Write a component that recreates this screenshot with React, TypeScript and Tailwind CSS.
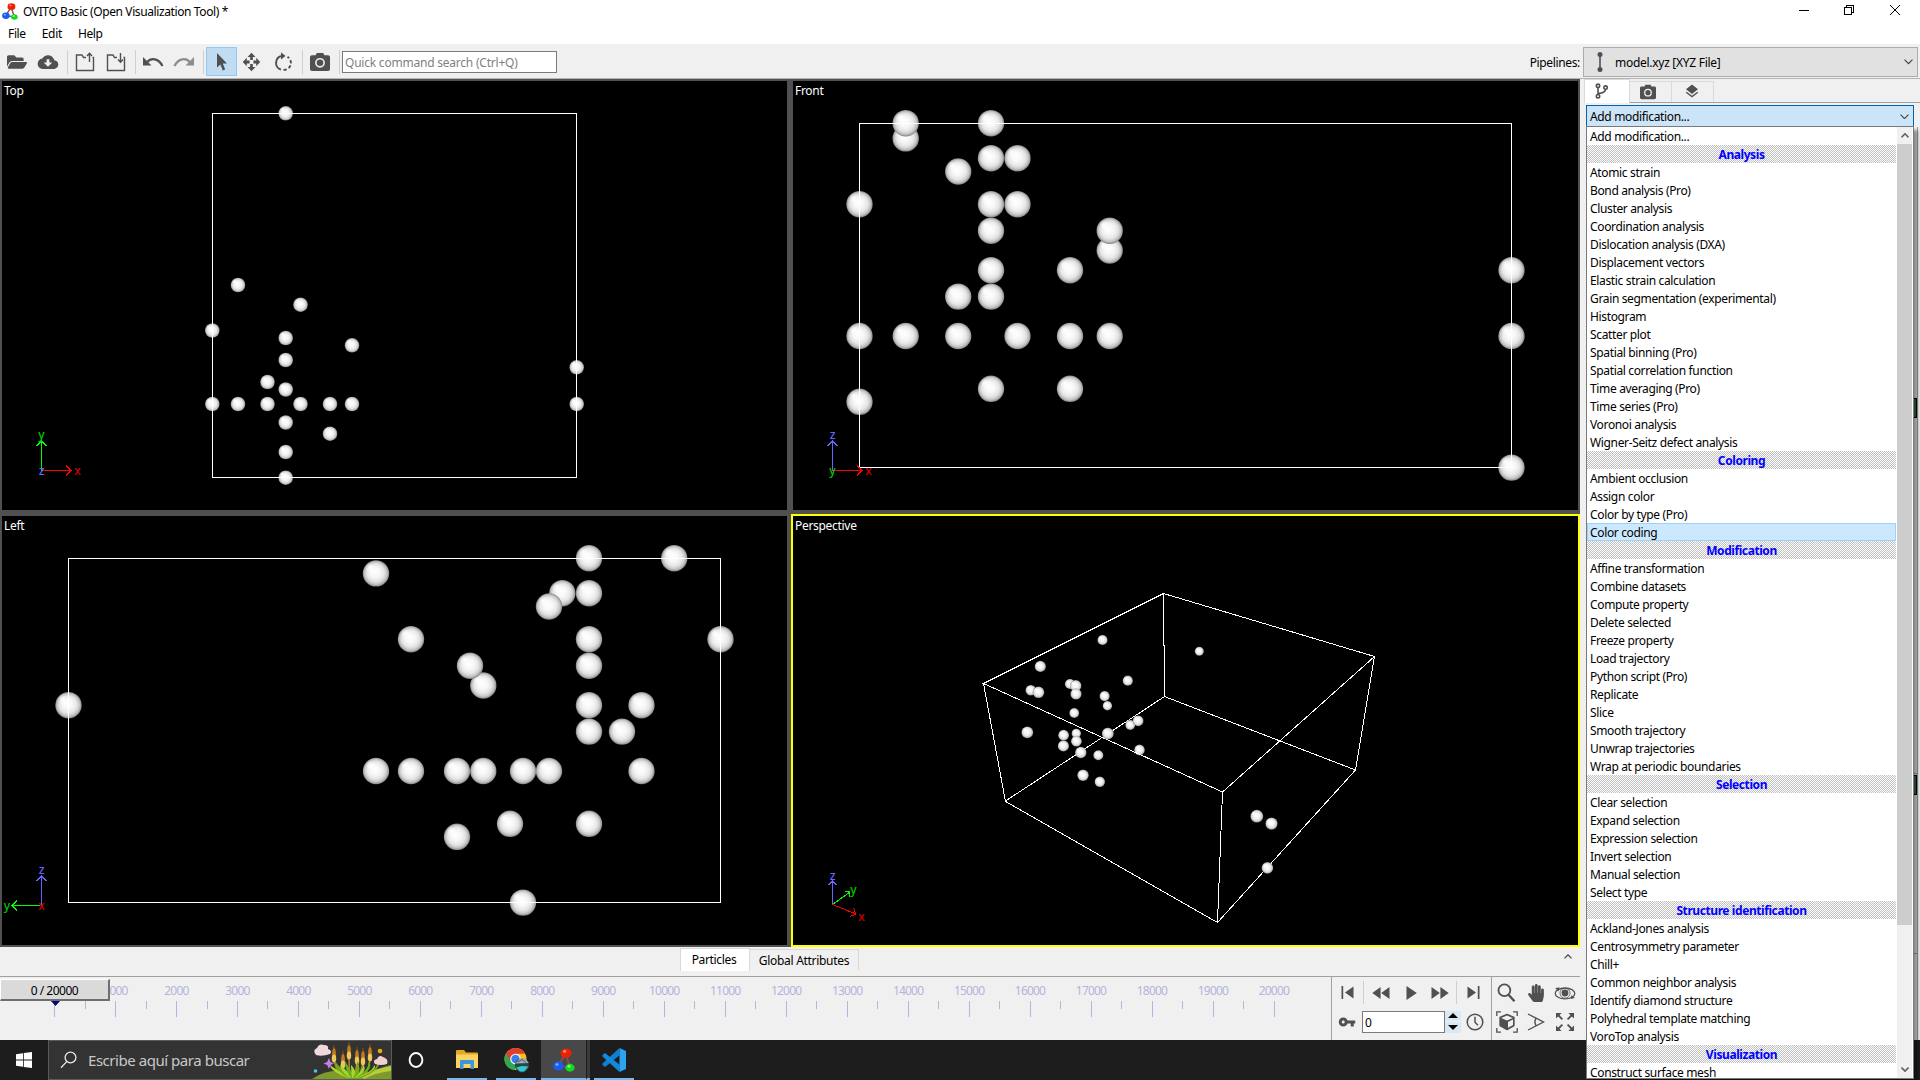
import React from "react";
import { FaFolderOpen, FaHandPaper } from "react-icons/fa";
import { IoMdCloudDownload } from "react-icons/io";
import { MdVpnKey } from "react-icons/md";

type Pt = [number, number];

const INK = "#505050";

/* ---------- viewport scenes ---------- */

function SphereDefs() {
  return (
    <svg className="absolute h-0 w-0">
      <defs>
        <radialGradient id="sphere" cx="0.5" cy="0.5" r="0.5" fx="0.44" fy="0.42">
          <stop offset="0" stopColor="#ffffff" />
          <stop offset="0.35" stopColor="#f8f8f8" />
          <stop offset="0.65" stopColor="#e6e6e6" />
          <stop offset="0.85" stopColor="#c4c4c4" />
          <stop offset="0.96" stopColor="#989898" />
          <stop offset="1" stopColor="#7c7c7c" />
        </radialGradient>
        <radialGradient id="glint">
          <stop offset="0" stopColor="#ffffff" stopOpacity="1" />
          <stop offset="1" stopColor="#ffffff" stopOpacity="0" />
        </radialGradient>
      </defs>
    </svg>
  );
}

function Spheres({ pts, r }: { pts: number[][]; r: number }) {
  return (
    <>
      {pts.map((p, i) => {
        const q = p[2] ?? r;
        return (
          <g key={i}>
            <circle cx={p[0]} cy={p[1]} r={q} fill="url(#sphere)" />
            <ellipse cx={p[0] - q * 0.42} cy={p[1] - q * 0.42} rx={q * 0.36} ry={q * 0.36} fill="url(#glint)" />
          </g>
        );
      })}
    </>
  );
}

function Arrow({ from, to, color }: { from: Pt; to: Pt; color: string }) {
  const dx = to[0] - from[0];
  const dy = to[1] - from[1];
  const l = Math.hypot(dx, dy);
  const s = Math.min(5, l * 0.18);
  const ux = (dx / l) * s;
  const uy = (dy / l) * s;
  return (
    <path
      d={`M${from[0]} ${from[1]}L${to[0]} ${to[1]}M${to[0] - ux - uy} ${to[1] - uy + ux}L${to[0]} ${to[1]}L${to[0] - ux + uy} ${to[1] - uy - ux}`}
      stroke={color}
      fill="none"
      shapeRendering="crispEdges"
    />
  );
}

function AxisLabel({ x, y, c, t }: { x: number; y: number; c: string; t: string }) {
  return (
    <text x={x} y={y + 3} fill={c} textAnchor="middle" className="font-['Noto_Sans'] text-[12px] font-medium tracking-normal">
      {t}
    </text>
  );
}

const RED = "#ff0000";
const GREEN = "#00ff00";
const BLUE = "#6666ff";

function Viewport({ title, view, active, children }: { title: string; view: string; active?: boolean; children: React.ReactNode }) {
  return (
    <div className={`relative h-[433px] w-[789px] border-2 bg-black ${active ? "border-[#ffff00]" : "border-[#505050]"}`}>
      <svg className="block h-[429px] w-[785px]" viewBox={view}>
        {children}
      </svg>
      <span className="absolute left-[2px] top-[2px] text-[12px] leading-[16px] tracking-[-0.3px] text-white">{title}</span>
    </div>
  );
}

const topPts = [
  [285.7, 113.3], [238, 285], [300.5, 304.7], [212.3, 330.5], [285.7, 338], [352, 345.3], [285.7, 360], [576.7, 367.3],
  [267.5, 382], [285.7, 389.5], [212.3, 404], [238, 404], [267.5, 404], [300.5, 404], [330, 404], [352, 404], [576.7, 404],
  [285.7, 422.5], [330, 433.7], [285.7, 452], [285.7, 477.7],
];

const frontPts = [
  [905.7, 138.4], [905.7, 123.2], [991, 123.2], [991, 158.2], [1017.5, 158.2], [958.2, 171.5], [859.5, 204.2], [991, 204.2], [1017.5, 204.2],
  [991, 230.7], [1109.7, 250.5], [1109.7, 230.7], [991, 270.2], [1070, 270.2], [1511.5, 270.2], [958.2, 296.6], [991, 296.6],
  [859.5, 336], [905.7, 336], [958.2, 336], [1017.5, 336], [1070, 336], [1109.7, 336], [1511.5, 336],
  [991, 388.8], [1070, 388.8], [859.5, 401.8], [1511.5, 467.6],
];

const leftPts = [
  [589, 558.2], [674.2, 558.2], [376, 573.4], [562.3, 593.2], [589, 593.2], [549, 606.5], [411, 639.2], [589, 639.2], [720.5, 639.2],
  [589, 665.7], [483.3, 685.5], [470, 665.7], [68.5, 705.2], [589, 705.2], [641.5, 705.2], [589, 731.6], [622, 731.6],
  [376, 771], [411, 771], [457, 771], [483.3, 771], [523, 771], [549, 771], [641.5, 771],
  [510, 823.8], [589, 823.8], [457, 836.8], [523, 902.6],
];

const perspPts = [
  [1102.5, 640, 5.1], [1199.3, 651.3, 4.5], [1040.3, 666.4, 5.6], [1127.8, 680.7, 5.1], [1070, 684, 5.1], [1075.7, 685.8, 5.7], [1030.8, 690.2, 5.3],
  [1038.5, 692.3, 5.8], [1076, 694, 5.6], [1104.6, 696.1, 5.1], [1107.4, 705.7, 4.7], [1074.2, 713, 4.9], [1130.2, 725, 4.9], [1138.1, 720.8, 5.4],
  [1027.3, 732.3, 5.9], [1063.6, 735.2, 5.4], [1076.3, 733.4, 4.7], [1076.4, 741.2, 5.4], [1063.4, 745.9, 5.6], [1107.8, 733.5, 5.8],
  [1080.8, 752.5, 5.7], [1098.3, 755.2, 5], [1139.5, 749.9, 5.3], [1083, 775.3, 5.7], [1099.8, 781.8, 5.2], [1256.8, 816.2, 6.4],
  [1271.5, 823.6, 6.1],
];

/* ---------- icons ---------- */

function OvitoLogo({ w, h }: { w: number; h: number }) {
  return (
    <svg width={w} height={h} viewBox="0 0 22 28" preserveAspectRatio="none">
      <path d="M12.5 7L5 21L17 22.5Z" fill="none" stroke="#8a4a58" strokeWidth="2" />
      <circle cx="13" cy="6" r="5.4" fill="#ee2200" />
      <circle cx="11.6" cy="4" r="1.6" fill="#ff8a70" />
      <circle cx="5.4" cy="21" r="5.2" fill="#1a5cf0" />
      <circle cx="4" cy="19.2" r="1.5" fill="#80b0ff" />
      <circle cx="17" cy="23" r="4.6" fill="#10dd20" />
      <circle cx="16" cy="21.4" r="1.4" fill="#a0ffa0" />
    </svg>
  );
}

function Camera({ w }: { w: number }) {
  return (
    <svg width={w} height={w} viewBox="0 0 20 20">
      <path d="M2 3.2H5.6L6.8 1H13.2L14.4 3.2H18Q20 3.2 20 5V17.2Q20 19 18 19H2Q0 19 0 17.2V5Q0 3.2 2 3.2Z" fill={INK} />
      <circle cx="10" cy="10.8" r="4.1" fill={INK} stroke="#f0f0f0" strokeWidth="1.6" />
    </svg>
  );
}

function FolderArrow({ down }: { down?: boolean }) {
  return (
    <svg width="20" height="20" viewBox="0 0 20 20" fill="none" stroke={INK} strokeWidth="1.4">
      <path d="M11 5.5H8.5L7 3H1.5V18.5H18.5V5.5H17.5" />
      <path d={down ? "M14.5 1V10M12 7.5L14.5 10.2L17 7.5" : "M14.5 10V1.5M12 4L14.5 1.2L17 4"} />
    </svg>
  );
}

function Undo({ color, flip }: { color: string; flip?: boolean }) {
  return (
    <svg width="22" height="16" viewBox="0 0 22 16" className={flip ? "-scale-x-100" : ""}>
      <path d="M5 8.2C9 3.6 16.5 4 20.5 12" fill="none" stroke={color} strokeWidth="2.2" />
      <path d="M1 3V11.5H9.5Z" fill={color} />
    </svg>
  );
}

function MoveIcon() {
  return (
    <svg width="19" height="20" viewBox="0 0 20 20" preserveAspectRatio="none" fill={INK}>
      {[0, 90, 180, 270].map((a) => (
        <path key={a} transform={`rotate(${a} 10 10)`} d="M10 0.8L14.2 5H11.4V8H8.6V5H5.8Z" />
      ))}
    </svg>
  );
}

function RotateIcon() {
  return (
    <svg width="20" height="22" viewBox="0 0 20 22" fill="none" stroke={INK} strokeWidth="1.9">
      <path d="M8 18.6A7 7 0 0 1 9 5" />
      <path d="M10.5 18.9A7 7 0 0 0 14.5 5.9" strokeDasharray="3.2 2.2" />
      <path d="M8 1.2L12.5 5L8 8.6Z" fill={INK} stroke="none" />
    </svg>
  );
}

function ToolButton({ active, children }: { active?: boolean; children: React.ReactNode }) {
  return (
    <div
      className={`flex h-[29px] w-[31px] items-center justify-center text-[#505050] ${active ? "border border-[#90c8f6] bg-[#c0dcf3] pl-px" : "pr-[2px]"}`}
    >
      {children}
    </div>
  );
}

function ToolSep() {
  return (
    <div className="flex h-[24px] w-[6px] justify-center">
      <div className="w-px bg-[#cfcfcf]" />
    </div>
  );
}

function Chevron({ w = 9, color = "#404040", up, sw = 1.2 }: { w?: number; color?: string; up?: boolean; sw?: number }) {
  return (
    <svg width={w} height={w * 0.62} viewBox="0 0 10 6.2" className={up ? "rotate-180" : ""}>
      <path d="M0.6 0.8L5 5.2L9.4 0.8" fill="none" stroke={color} strokeWidth={sw} />
    </svg>
  );
}

/* ---------- modifier list ---------- */

const groups: { name: string; items: string[] }[] = [
  {
    name: "Analysis",
    items: [
      "Atomic strain", "Bond analysis (Pro)", "Cluster analysis", "Coordination analysis", "Dislocation analysis (DXA)",
      "Displacement vectors", "Elastic strain calculation", "Grain segmentation (experimental)", "Histogram", "Scatter plot",
      "Spatial binning (Pro)", "Spatial correlation function", "Time averaging (Pro)", "Time series (Pro)", "Voronoi analysis",
      "Wigner-Seitz defect analysis",
    ],
  },
  { name: "Coloring", items: ["Ambient occlusion", "Assign color", "Color by type (Pro)", "Color coding"] },
  {
    name: "Modification",
    items: [
      "Affine transformation", "Combine datasets", "Compute property", "Delete selected", "Freeze property", "Load trajectory",
      "Python script (Pro)", "Replicate", "Slice", "Smooth trajectory", "Unwrap trajectories", "Wrap at periodic boundaries",
    ],
  },
  {
    name: "Selection",
    items: ["Clear selection", "Expand selection", "Expression selection", "Invert selection", "Manual selection", "Select type"],
  },
  {
    name: "Structure identification",
    items: [
      "Ackland-Jones analysis", "Centrosymmetry parameter", "Chill+", "Common neighbor analysis", "Identify diamond structure",
      "Polyhedral template matching", "VoroTop analysis",
    ],
  },
  { name: "Visualization", items: ["Construct surface mesh"] },
];

function ModifierPopup() {
  return (
    <div className="absolute left-[1586px] top-[126px] flex h-[953px] w-[328px] border border-[#7a7a7a] bg-white shadow-[4px_4px_3px_rgba(0,0,0,0.4)]">
      <div className="w-[309px]">
        <div className="h-[18px] pl-[3px] leading-[19px]">Add modification...</div>
        {groups.map((g) => (
          <div key={g.name}>
            <div className="h-[18px] bg-[repeating-conic-gradient(#c0c0c0_0_25%,#ffffff_0_50%)] bg-[length:2px_2px] text-center font-bold leading-[19px] tracking-[-0.42px] text-[#0000ff]">
              {g.name}
            </div>
            {g.items.map((it) => (
              <div
                key={it}
                className={
                  it === "Color coding"
                    ? "h-[18px] border border-[#99d1ff] bg-[#cce8ff] pl-[2px] leading-[17px]"
                    : "h-[18px] pl-[3px] leading-[19px]"
                }
              >
                {it}
              </div>
            ))}
          </div>
        ))}
      </div>
      <div className="ml-px flex w-[15px] flex-col items-center bg-[#f0f0f0]">
        <div className="flex h-[17px] items-center">
          <Chevron up w={8} sw={2} color="#606060" />
        </div>
        <div className="h-[781px] w-full bg-[#cdcdcd]" />
        <div className="mt-auto flex h-[17px] items-center">
          <Chevron w={8} sw={2} color="#606060" />
        </div>
      </div>
    </div>
  );
}

/* ---------- timeline ---------- */

function Timeline() {
  const step = 60.97;
  return (
    <div className="relative h-[63px] w-[1331px] overflow-hidden">
      <svg className="block h-[63px] w-[1331px]" viewBox="0 977 1331 63">
        {Array.from({ length: 41 }, (_, i) => {
          const x = Math.floor(54.6 + (i * step) / 2) + 0.5;
          return <path key={i} d={`M${x} 1001V${i % 2 ? 1009 : 1017}`} stroke="#b4b4dc" shapeRendering="crispEdges" />;
        })}
        {Array.from({ length: 20 }, (_, i) => (
          <text key={i} x={54.5 + (i + 1) * step} y={995} textAnchor="middle" fill="#b4b4dc" className="text-[12px] tracking-[-0.8px]">
            {(i + 1) * 1000}
          </text>
        ))}
        <path d="M51.5 1001H59.5L55.5 1005.5Z" fill="#0000c0" stroke="#000" strokeWidth="0.8" />
      </svg>
      <div className="absolute left-0 top-[2px] h-[22px] w-[110px] border-b-2 border-l border-r-2 border-t border-b-[#6e6e6e] border-l-white border-r-[#6e6e6e] border-t-white bg-[#dadada] text-center leading-[21px] tracking-[-0.5px] text-black">
        0 / 20000
      </div>
    </div>
  );
}

function Cell({ w, children }: { w: string; children: React.ReactNode }) {
  return <div className={`flex h-[29px] shrink-0 items-center justify-center text-[#505050] ${w}`}>{children}</div>;
}

function PlaybackControls() {
  return (
    <div className="flex h-[63px] w-[160px] flex-col border-l border-[#a0a0a0] pt-px">
      <div className="flex h-[29px] items-center">
        <Cell w="w-[31px]">
          <svg width="13" height="13" viewBox="0 0 13 13" fill={INK}><path d="M0.5 0H2.2V13H0.5ZM12.5 0.5V12.5L4 6.5Z" /></svg>
        </Cell>
        <div className="h-[23px] w-px bg-[#cfcfcf]" />
        <Cell w="w-[34px]">
          <svg width="18" height="12" viewBox="0 0 18 12" fill={INK}><path d="M8.6 0V12L0.3 6ZM17.5 0V12L9.2 6Z" /></svg>
        </Cell>
        <Cell w="w-[27px]">
          <svg width="11" height="14" viewBox="0 0 11 14" fill={INK}><path d="M0.5 0V14L10.8 7Z" /></svg>
        </Cell>
        <Cell w="w-[31px]">
          <svg width="18" height="12" viewBox="0 0 18 12" fill={INK}><path d="M0.5 0V12L8.8 6ZM9.4 0V12L17.7 6Z" /></svg>
        </Cell>
        <div className="h-[23px] w-px bg-[#cfcfcf]" />
        <Cell w="w-[35px]">
          <svg width="13" height="13" viewBox="0 0 13 13" fill={INK}><path d="M12.5 0H10.8V13H12.5ZM0.5 0.5V12.5L9 6.5Z" /></svg>
        </Cell>
      </div>
      <div className="flex h-[29px] items-center">
        <Cell w="w-[30px]"><MdVpnKey size={18} /></Cell>
        <div className="h-[22px] w-[83px] border border-[#7a7a7a] bg-white pl-[2px] leading-[21px] text-black">0</div>
        <div className="flex h-[22px] w-[16px] flex-col gap-px">
          <div className="flex flex-1 items-center justify-center bg-[#d9e8f5]">
            <svg width="10" height="5" viewBox="0 0 10 5"><path d="M0 5L5 0L10 5Z" fill="#000" /></svg>
          </div>
          <div className="flex flex-1 items-center justify-center bg-[#d9e8f5]">
            <svg width="10" height="5" viewBox="0 0 10 5"><path d="M0 0L5 5L10 0Z" fill="#000" /></svg>
          </div>
        </div>
        <Cell w="w-[28px]">
          <svg width="18" height="18" viewBox="0 0 18 18" fill="none" stroke={INK} strokeWidth="1.5">
            <circle cx="9" cy="9" r="7.8" />
            <path d="M9 3.8V9.2L12 12.2" />
          </svg>
        </Cell>
      </div>
    </div>
  );
}

function NavControls() {
  return (
    <div className="grid h-[63px] w-[89px] grid-cols-[29px_29px_29px] content-start border-l border-[#a0a0a0] pt-px">
      <Cell w="w-[29px]">
        <svg width="19" height="20" viewBox="0 0 19 20" fill="none" stroke={INK}>
          <circle cx="7.4" cy="7.2" r="5.9" strokeWidth="1.8" />
          <path d="M11.5 11.7L17.5 18.2" strokeWidth="2.4" />
        </svg>
      </Cell>
      <Cell w="w-[29px]"><FaHandPaper size={18} /></Cell>
      <Cell w="w-[29px]">
        <svg width="22" height="14" viewBox="0 0 22 14" fill="none" stroke={INK} strokeWidth="1.3">
          <ellipse cx="11" cy="7.4" rx="9.8" ry="5.4" />
          <circle cx="11" cy="7" r="3.4" fill={INK} stroke="none" />
          <circle cx="11" cy="7.2" r="5" strokeWidth="0.8" />
          <path d="M1.2 2.2L5.4 1.2L4.6 5.4ZM20.8 12L16.6 13L17.4 9.2Z" fill={INK} stroke="none" />
        </svg>
      </Cell>
      <Cell w="w-[29px]">
        <svg width="22" height="22" viewBox="0 0 22 22" fill="none" stroke={INK} strokeWidth="1.3">
          <path d="M0.8 5V0.8H5M17 0.8H21.2V5M21.2 17V21.2H17M5 21.2H0.8V17" />
          <path d="M11 3.4L18 6.4V14.6L11 18.6L4 14.6V6.4Z" fill={INK} strokeLinejoin="round" />
          <path d="M5.2 6.9L11 4.6L16.8 6.9L11 9.4Z" fill="#f0f0f0" stroke="none" />
          <path d="M12 11L17 8.6V14L12 16.8Z" fill="#f0f0f0" stroke="none" />
        </svg>
      </Cell>
      <Cell w="w-[29px]">
        <svg width="18" height="18" viewBox="0 0 18 18" fill="none" stroke={INK} strokeWidth="1.4">
          <path d="M1 1L16.5 9L1 17" />
          <path d="M9.2 5.2Q6.6 9 9.2 12.8" />
        </svg>
      </Cell>
      <Cell w="w-[29px]">
        <svg width="18" height="18" viewBox="0 0 18 18" fill={INK} stroke={INK} strokeWidth="1.8">
          {[0, 90, 180, 270].map((a) => (
            <g key={a} transform={`rotate(${a} 9 9)`}>
              <path d="M2 2L6.4 6.4" />
              <path d="M0 0H5.6L0 5.6Z" stroke="none" />
            </g>
          ))}
        </svg>
      </Cell>
    </div>
  );
}

/* ---------- taskbar ---------- */

function Meadow() {
  return (
    <svg width="79" height="38" viewBox="0 0 79 38">
      <path d="M0 38Q20 24 50 34Q66 27 79 24V38Z" fill="#7f9a2a" />
      <path d="M48 34Q64 28 79 25V30Q62 32 52 38Z" fill="#b9cc3d" />
      {[[22, 8, 30], [31, 14, 34], [37, 5, 38], [45, 10, 42], [51, 11, 46], [58, 7, 52]].map(([x, y, b], i) => (
        <g key={i}>
          <path d={`M${x} ${y + 8}Q${x} 26 ${b} 36`} stroke="#b98b28" fill="none" strokeWidth="1.4" />
          <ellipse cx={x} cy={y + 5} rx="1.9" ry="6.5" fill="#c07a22" />
          <ellipse cx={x} cy={y + 9.5} rx="2.2" ry="4" fill="#f1c75a" />
          <path d={`M${x} ${y - 4}V${y}`} stroke="#8a4e18" />
        </g>
      ))}
      {[18, 23, 28, 33, 39, 45, 51, 57, 62, 66].map((x, i) => (
        <path key={i} d={`M${36 + i} 37Q${x} 30 ${x} ${i % 2 ? 20 : 24}Q${x + 5} 28 ${40 + i} 37Z`} fill={i % 2 ? "#6fae1c" : "#a6d62c"} />
      ))}
      <path d="M4 14Q0 9 5 7Q7 2 12 4Q17 4 16 8Q21 10 18 13Q10 16 4 14Z" fill="#f0d9dc" />
      <path d="M63 23Q60 19 65 18Q67 13 71 16Q77 18 75 23Q69 25 63 23Z" fill="#f0d0d0" />
      <path d="M17 17L18.5 21L22 22.5L18.5 24L17 28L15.2 24L11.5 22.5L15.2 21Z" fill="#c77df0" />
      <circle cx="68" cy="10" r="2.3" fill="#f5a800" />
      <circle cx="3.5" cy="30" r="1.8" fill="#4fc7dc" />
    </svg>
  );
}

function TaskItem({ w, active, children }: { w: string; active?: boolean; children: React.ReactNode }) {
  return (
    <div className={`flex h-[40px] items-center justify-center border-b-2 border-[#76b9ed] pt-px ${w} ${active ? "bg-[#484848]" : ""}`}>{children}</div>
  );
}

function Taskbar() {
  return (
    <div className="flex h-[40px] w-[1920px] items-center bg-[#1d1d1d]">
      <div className="flex w-[48px] justify-center">
        <svg width="16" height="16" viewBox="0 0 16 16" fill="#fff"><path d="M0 2.2L7 1.2V7.6H0ZM7.8 1.1L16 0V7.6H7.8ZM0 8.4H7V14.8L0 13.8ZM7.8 8.4H16V16L7.8 14.9Z" /></svg>
      </div>
      <div className="flex h-[40px] w-[344px] items-center border border-[#5a5a5a] bg-[#333333]">
        <svg width="17" height="18" viewBox="0 0 17 18" className="ml-[11px]" fill="none" stroke="#e8e8e8" strokeWidth="1.3">
          <circle cx="10.5" cy="6.5" r="5.4" />
          <path d="M6.7 10.6L1 16.8" />
        </svg>
        <span className="ml-[11px] text-[15px] tracking-[-0.46px] text-[#c8c8c8]">Escribe aquí para buscar</span>
        <div className="ml-auto"><Meadow /></div>
      </div>
      <div className="flex w-[48px] justify-center">
        <svg width="18" height="18" viewBox="0 0 18 18"><ellipse cx="9" cy="9" rx="6.4" ry="7" fill="none" stroke="#fff" strokeWidth="1.9" /></svg>
      </div>
      <div className="ml-[7px] flex items-center gap-[9px]">
        <TaskItem w="w-[40px]">
          <svg width="22" height="19" viewBox="0 0 22 19">
            <path d="M0 1Q0 0 1 0H8L10 2.5H21Q22 2.5 22 3.5V18H0Z" fill="#e8a820" />
            <path d="M0 4.5H22V18H0Z" fill="#fcd462" />
            <path d="M4 19V11Q4 10 5 10H17Q18 10 18 11V19H14.5V14H7.5V19Z" fill="#3a96dd" />
          </svg>
        </TaskItem>
        <TaskItem w="w-[40px]">
          <svg width="26" height="26" viewBox="0 0 26 26" className="ml-[2px]">
            <circle cx="11.5" cy="12" r="11" fill="#fbc116" />
            <path d="M11.5 12L2 6.5A11 11 0 0 0 10.5 23L16 14.6Z" fill="#2da94f" />
            <path d="M11.5 6.8H21.2A11 11 0 0 0 2 6.5L7 14.5Z" fill="#e33b2e" />
            <circle cx="11.5" cy="12" r="5.3" fill="#fff" />
            <circle cx="11.5" cy="12" r="4.2" fill="#3b7ded" />
            <circle cx="18" cy="18.5" r="7" fill="#27474d" />
            <path d="M11.5 16.5L16 11.5L21 11L24.8 16Z" fill="#9fb0b4" />
            <path d="M14 15L18 12.5L22 15.5" stroke="#4c5a60" fill="none" />
            <path d="M12 20.5L18 19L24.5 19.5L20 24.5H16Z" fill="#35c8cd" />
          </svg>
        </TaskItem>
      </div>
      <div className="ml-[5px] flex">
        <TaskItem w="w-[45px]" active>
          <OvitoLogo w={22} h={24} />
        </TaskItem>
        <div className="h-[40px] w-[4px] border-b-2 border-l border-b-[#76b9ed] border-l-[#1d1d1d] bg-[#3a3a3a]" />
      </div>
      <div className="ml-[4px]">
        <TaskItem w="w-[40px]">
          <svg width="24" height="24" viewBox="0 0 24 24">
            <path d="M17.5 0L24 3V21L17.5 24Z" fill="#2aa4f0" />
            <path d="M17.5 0L0.5 15.5V17L3 19L18 7Z" fill="#0f7fd0" />
            <path d="M17.5 24L0.5 8.5V7L3 5L18 17Z" fill="#1389d8" />
          </svg>
        </TaskItem>
      </div>
    </div>
  );
}

/* ---------- page ---------- */

export default function App() {
  return (
    <div className="relative h-[1080px] w-[1920px] overflow-hidden bg-[#f0f0f0] font-['Noto_Sans','Open_Sans',sans-serif] text-[12px] tracking-[-0.35px] text-black">
      <SphereDefs />
      <div className="flex h-[22px] items-center bg-white pl-[2px]">
        <OvitoLogo w={16} h={17} />
        <span className="ml-[5px] mt-[2px] leading-[20px] tracking-[-0.39px]">OVITO Basic (Open Visualization Tool) *</span>
        <svg className="ml-auto mr-[18px]" width="104" height="14" viewBox="0 0 104 14" fill="none" stroke="#000" shapeRendering="crispEdges">
          <path d="M1 6.5H11" />
          <path d="M46.5 3.5H53.5V10.5H46.5ZM48.5 3V1.5H55.5V8.5H54" />
          <path d="M92 1L102 11M102 1L92 11" shapeRendering="auto" />
        </svg>
      </div>
      <div className="flex h-[22px] items-center gap-[16px] bg-white pl-[8px] pt-[2px]">
        <span>File</span>
        <span>Edit</span>
        <span>Help</span>
      </div>
      <div className="flex h-[35px] items-center border-b border-t border-b-[#b4b4b4] border-t-[#f0f0f0] pl-[2px]">
        <ToolButton><FaFolderOpen size={20} /></ToolButton>
        <ToolButton><IoMdCloudDownload size={22} /></ToolButton>
        <ToolSep />
        <ToolButton><FolderArrow /></ToolButton>
        <ToolButton><FolderArrow down /></ToolButton>
        <ToolSep />
        <ToolButton><Undo color={INK} /></ToolButton>
        <ToolButton><Undo color="#8c8c8c" flip /></ToolButton>
        <ToolSep />
        <ToolButton active>
          <svg width="12" height="18" viewBox="0 0 12 18" className="mt-px"><path d="M1 0L11 10.5H6.8L9.2 16.6L6.8 17.6L4.4 11.4L1 14.6Z" fill={INK} /></svg>
        </ToolButton>
        <ToolButton><MoveIcon /></ToolButton>
        <ToolButton><RotateIcon /></ToolButton>
        <ToolSep />
        <ToolButton><Camera w={20} /></ToolButton>
        <ToolSep />
        <div className="h-[22px] w-[215px] border border-[#7a7a7a] bg-white pl-[2px] leading-[22px] tracking-[-0.22px] text-[#7f7f7f]">
          Quick command search (Ctrl+Q)
        </div>
        <span className="ml-auto mr-[3px] mt-[2px]">Pipelines:</span>
        <div className="mr-[2px] flex h-[30px] w-[335px] items-center border border-[#adadad] bg-[#e1e1e1] pr-[4px]">
          <svg width="8" height="20" viewBox="0 0 8 20" className="ml-[12px]" fill={INK}>
            <circle cx="4" cy="2.6" r="2.5" /><circle cx="4" cy="17.4" r="2.5" /><path d="M3.2 2H4.8V18H3.2Z" />
          </svg>
          <span className="ml-[11px] mt-[2px] tracking-[-0.28px]">model.xyz [XYZ File]</span>
          <span className="ml-auto mt-px"><Chevron /></span>
        </div>
      </div>

      <div className="flex h-[961px]">
        <div className="w-[1580px]">
          <div className="grid h-[868px] grid-cols-[789px_789px] gap-[2px] bg-[#505050]">
            <Viewport title="Top" view="2 81 785 429">
              <Spheres pts={topPts} r={7.3} />
              <path d="M212.5 113.5H576.5V477.5H212.5Z" fill="none" stroke="#fff" shapeRendering="crispEdges" />
              <Arrow from={[41.5, 470.5]} to={[41.5, 441]} color={GREEN} />
              <Arrow from={[41.5, 470.5]} to={[71, 470.5]} color={RED} />
              <AxisLabel x={41.5} y={436} c="#00c800" t="y" />
              <AxisLabel x={41.5} y={472} c={BLUE} t="z" />
              <AxisLabel x={77.5} y={472} c="#d00000" t="x" />
            </Viewport>
            <Viewport title="Front" view="793 81 785 429">
              <Spheres pts={frontPts} r={13.2} />
              <path d="M859.5 123.5H1511.5V467.5H859.5Z" fill="none" stroke="#fff" shapeRendering="crispEdges" />
              <Arrow from={[832.5, 470.5]} to={[832.5, 441]} color={BLUE} />
              <Arrow from={[832.5, 470.5]} to={[862, 470.5]} color={RED} />
              <AxisLabel x={832.5} y={436} c={BLUE} t="z" />
              <AxisLabel x={832.5} y={472} c="#00c800" t="y" />
              <AxisLabel x={868.5} y={472} c="#d00000" t="x" />
            </Viewport>
            <Viewport title="Left" view="2 516 785 429">
              <Spheres pts={leftPts} r={13.2} />
              <path d="M68.5 558.5H720.5V902.5H68.5Z" fill="none" stroke="#fff" shapeRendering="crispEdges" />
              <Arrow from={[41.5, 905.5]} to={[41.5, 876]} color={BLUE} />
              <Arrow from={[41.5, 905.5]} to={[12, 905.5]} color={GREEN} />
              <AxisLabel x={41.5} y={871} c={BLUE} t="z" />
              <AxisLabel x={7} y={907} c="#00c800" t="y" />
              <AxisLabel x={41.5} y={907} c="#d00000" t="x" />
            </Viewport>
            <Viewport title="Perspective" view="793 516 785 429" active>
              <g fill="none" stroke="#fff" shapeRendering="crispEdges">
                <path d="M1163.5 593.5L1164.5 696.5L1355.5 770M1164.5 696.5L1005.5 801" />
              </g>
              <Spheres pts={perspPts} r={5} />
              <g fill="none" stroke="#fff" shapeRendering="crispEdges">
                <path d="M1163.5 593.5L1374.5 656.5L1222.5 792L983.5 683.5Z" />
                <path d="M983.5 683.5L1005.5 801.5L1217.5 922.5L1222.5 792M1374.5 656.5L1355.5 770L1217.5 922.5" />
              </g>
              <Spheres pts={[[1267.4, 867.9, 5.8], [1107.8, 733.5, 5.8]]} r={5} />
              <Arrow from={[832.5, 904.5]} to={[832.5, 881]} color={BLUE} />
              <Arrow from={[832.5, 904.5]} to={[850, 892]} color={GREEN} />
              <Arrow from={[832.5, 904.5]} to={[856, 914]} color={RED} />
              <AxisLabel x={832.5} y={877} c={BLUE} t="z" />
              <AxisLabel x={853.5} y={891} c="#00c800" t="y" />
              <AxisLabel x={861.5} y={918} c="#d00000" t="x" />
            </Viewport>
          </div>

          <div className="flex h-[30px] items-start border-b border-[#a0a0a0] pl-[680px]">
            <div className="mt-px h-[23px] w-[70px] border border-b-0 border-[#d9d9d9] bg-white pr-[2px] text-center leading-[22px]">Particles</div>
            <div className="mt-[2px] h-[21px] w-[109px] border border-b-0 border-l-0 border-[#d9d9d9] text-center leading-[22px] tracking-[-0.3px]">Global Attributes</div>
            <div className="ml-auto mr-[8px] mt-[7px] h-[5px] leading-[5px]"><Chevron up w={8} sw={1.5} /></div>
          </div>
          <div className="flex h-[63px]">
            <Timeline />
            <PlaybackControls />
            <NavControls />
          </div>
        </div>

        <div className="flex h-[961px] w-[340px] flex-col pl-[4px]">
          <div className="flex h-[24px] items-end border-b border-[#a0a0a0]">
            <div className="mb-[-1px] flex h-[24px] w-[46px] items-center justify-center border border-b-0 border-[#d9d9d9] bg-white pb-[2px] pr-[10px]">
              <svg width="14" height="16" viewBox="0 0 14 16" fill="none" stroke={INK} strokeWidth="1.6">
                <circle cx="3" cy="2.8" r="1.7" /><circle cx="3" cy="13.2" r="1.7" /><circle cx="10.6" cy="4.6" r="1.7" />
                <path d="M3 4.5V11.5M10.6 6.4Q10.4 9.6 3.4 10.6" />
              </svg>
            </div>
            <div className="flex h-[21px] w-[42px] items-center justify-center border border-b-0 border-l-0 border-[#d9d9d9] pb-px pr-[6px]"><Camera w={16} /></div>
            <div className="flex h-[21px] w-[42px] items-center justify-center border border-b-0 border-l-0 border-[#d9d9d9] pb-[2px] pr-[2px]">
              <svg width="14" height="14" viewBox="0 0 14 14">
                <path d="M7 0.5L13 5.2L7 9.9L1 5.2Z" fill={INK} />
                <path d="M1.2 8.2L7 12.6L12.8 8.2" fill="none" stroke={INK} strokeWidth="1.3" />
              </svg>
            </div>
          </div>
          <div className="ml-[2px] mt-[2px] flex h-[22px] w-[328px] shrink-0 items-center border border-[#0063b1] bg-[#cce4f7] pl-[3px] pr-[4px]">
            <span className="mt-[2px]">Add modification...</span>
            <span className="ml-auto mt-px"><Chevron /></span>
          </div>
          <div className="ml-auto mr-[2px] flex w-[5px] flex-1 flex-col border-r border-[#a0a0a0]">
            <div className="mt-[271px] h-[20px] border border-l-0 border-black bg-[#3d6b3d]" />
            <div className="mt-[355px] h-px bg-[#a0a0a0]" />
            <div className="mt-px h-[20px] border border-l-0 border-black bg-[#3d6b3d]" />
            <div className="mt-[158px] h-px bg-[#a0a0a0]" />
          </div>
        </div>
      </div>

      <Taskbar />
      <ModifierPopup />
    </div>
  );
}
